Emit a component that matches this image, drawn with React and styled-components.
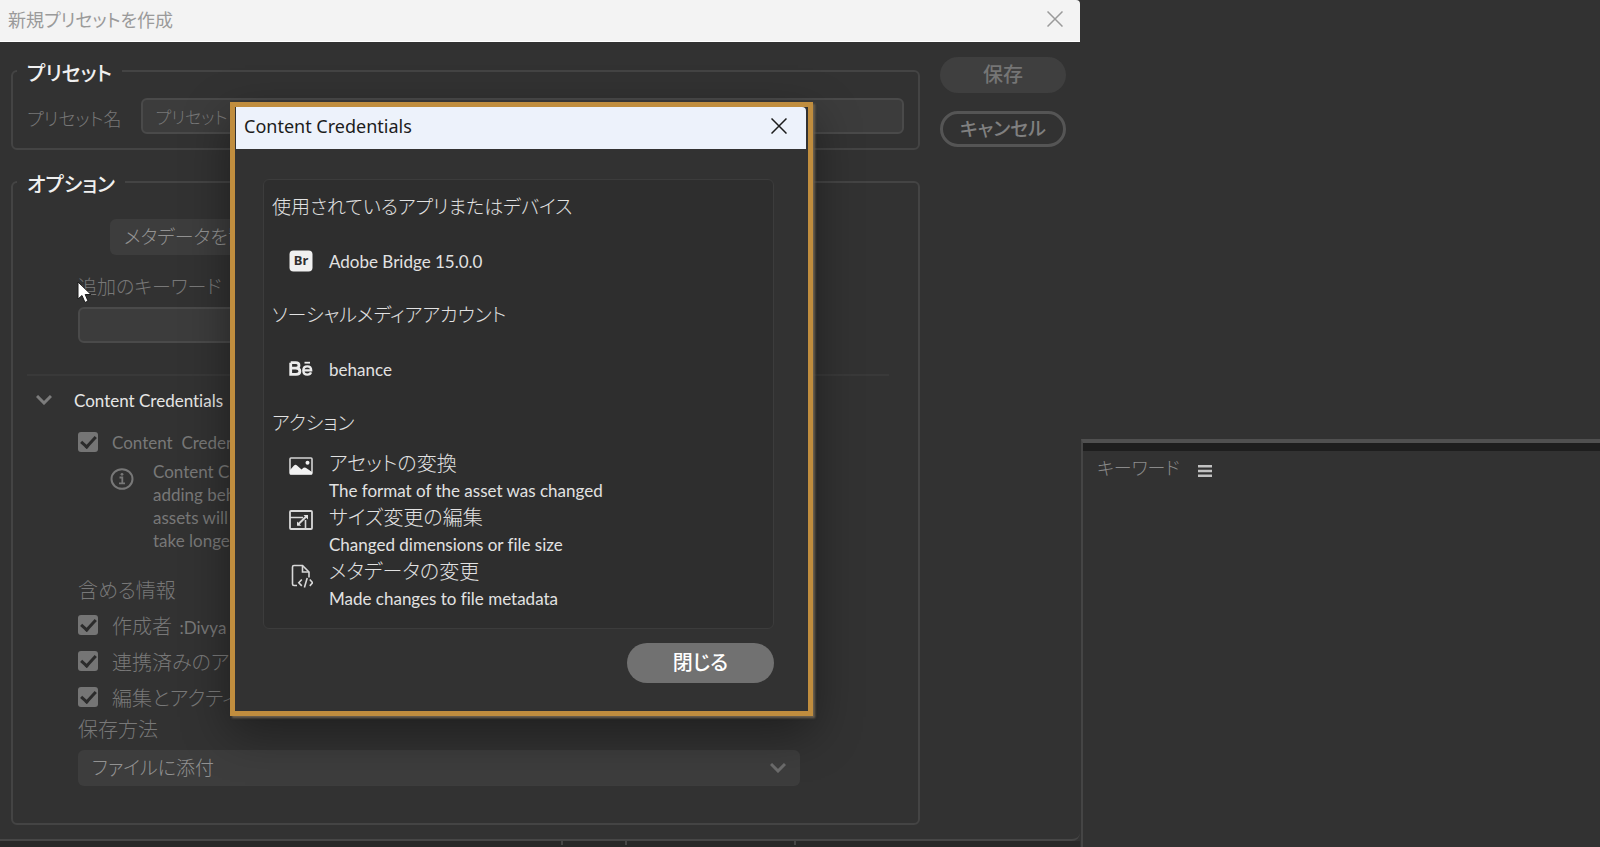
import React, { useState } from 'react';
import styled, { createGlobalStyle, css } from 'styled-components';

const actions = [
  { icon: 'image', title: 'アセットの変換', text: 'The format of the asset was changed' },
  { icon: 'resize', title: 'サイズ変更の編集', text: 'Changed dimensions or file size' },
  { icon: 'metadata', title: 'メタデータの変更', text: 'Made changes to file metadata' },
];

const includes = [
  { id: 'creator', label: '作成者', extra: ':Divya' },
  { id: 'accounts', label: '連携済みのアカウント' },
  { id: 'edits', label: '編集とアクティビティ' },
];

function CloseIcon() {
  return (
    <svg width="16" height="16" viewBox="0 0 16 16" fill="none" stroke="currentColor" strokeWidth="1.5">
      <path d="M0.5 0.5 15.5 15.5M15.5 0.5 0.5 15.5" />
    </svg>
  );
}

function Chevron() {
  return (
    <svg width="16" height="10" viewBox="0 0 16 10" fill="none" stroke="currentColor" strokeWidth="3">
      <path d="M1 1 8 8 15 1" />
    </svg>
  );
}

function InfoIcon() {
  return (
    <svg width="24" height="22" viewBox="0 0 24 22" fill="none" stroke="currentColor" strokeWidth="2">
      <ellipse cx="12" cy="11" rx="10.5" ry="9.8" />
      <path d="M9.5 9.5H12.3V15M9 15.3H15" strokeWidth="1.8" />
      <circle cx="12" cy="6.3" r="1.4" fill="currentColor" stroke="none" />
    </svg>
  );
}

function BridgeIcon() {
  return (
    <svg width="24" height="22" viewBox="0 0 24 22">
      <rect x="0.5" y="0.5" width="23" height="21" rx="4" fill="#f0f0f0" />
      <text x="12" y="15" textAnchor="middle" fontSize="13" fontWeight="700" fontFamily="Noto Sans, sans-serif" fill="#2f2f2f">Br</text>
    </svg>
  );
}

function BehanceIcon() {
  return (
    <svg width="24" height="16" viewBox="0 0 24 16" fill="none" stroke="#ececec">
      <path d="M1.7 1.7H6.6Q10 1.7 10 4.5 10 7.2 6.8 7.2H1.7M6.8 7.2Q10.9 7.2 10.9 10.3 10.9 13.4 7 13.4H1.7V1.7" strokeWidth="2.8" />
      <path d="M14.2 9.4H22.2Q22.2 5.4 18.3 5.4 14.3 5.4 14.3 9.5 14.3 13.6 18.4 13.6 21.3 13.6 22 11.4" strokeWidth="2.3" />
      <path d="M15.5 1.7H21" strokeWidth="1.8" />
    </svg>
  );
}

function ActionIcon({ type }) {
  if (type === 'image') {
    return (
      <svg width="24" height="20" viewBox="0 0 24 20">
        <rect x="1" y="2" width="22" height="16" rx="1" fill="none" stroke="#d4d4d4" strokeWidth="1.6" />
        <path d="M1 14 5 9.5Q6.5 8 8 9.5L12.5 13.5 14.5 11.8Q16 10.8 17.5 12.2L23 16V18.5H1Z" fill="#f2f2f2" />
        <circle cx="18.5" cy="6.8" r="2" fill="#f2f2f2" />
      </svg>
    );
  }
  if (type === 'resize') {
    return (
      <svg width="24" height="20" viewBox="0 0 24 20" fill="none" stroke="#d8d8d8" strokeWidth="1.8">
        <rect x="1" y="1" width="22" height="18" rx="1" />
        <path d="M1 7.5H14M16.5 10V19" strokeWidth="1.6" />
        <path d="M9 14.5 17.5 6.2" strokeWidth="2" />
        <path d="M14.5 5H19V9.5ZM8 11.5V15.7H12.2Z" fill="#e0e0e0" stroke="none" />
      </svg>
    );
  }
  return (
    <svg width="24" height="24" viewBox="0 0 24 24" fill="none" stroke="#d8d8d8" strokeWidth="1.6">
      <path d="M8 21.5H5Q3.5 21.5 3.5 20V3Q3.5 1.5 5 1.5H13.5L20 8V13.5" />
      <path d="M13.5 1.5V8H20" />
      <path d="M12.8 15.5 9.8 18.7 12.8 21.9M20.8 15.5 23.6 18.7 20.8 21.9M18.2 14 15.4 23.4" />
    </svg>
  );
}

function App() {
  const [open, setOpen] = useState(true);

  return (
    <>
      <GlobalStyle />
      <Screen>
        <PresetWindow>
          <TitleBar>
            <span>新規プリセットを作成</span>
            <IconButton type="button" aria-label="閉じる">
              <CloseIcon />
            </IconButton>
          </TitleBar>
          <WindowBody>
            <Groups>
              <Group>
                <legend>プリセット</legend>
                <NameRow>
                  <label htmlFor="preset-name">プリセット名</label>
                  <TextInput id="preset-name" defaultValue="プリセット" />
                </NameRow>
              </Group>
              <Group $grow>
                <legend>オプション</legend>
                <Options>
                  <SelectWrap $indent>
                    <select aria-label="メタデータ">
                      <option>メタデータを置換</option>
                    </select>
                    <Chevron />
                  </SelectWrap>
                  <FieldLabel as="label" htmlFor="keywords" $top>追加のキーワード</FieldLabel>
                  <TextInput id="keywords" />
                </Options>
                <Divider />
                <SectionToggle type="button">
                  <Chevron />
                  Content Credentials
                </SectionToggle>
                <Options>
                  <CheckRow>
                    <input type="checkbox" defaultChecked />
                    <Preserved>{'Content  Credentials'}</Preserved>
                  </CheckRow>
                  <Note>
                    <InfoIcon />
                    <p>
                      Content Credentials
                      <br />
                      adding behance
                      <br />
                      assets will
                      <br />
                      take longer
                    </p>
                  </Note>
                  <FieldLabel>含める情報</FieldLabel>
                  {includes.map((item) => (
                    <CheckRow key={item.id}>
                      <input type="checkbox" defaultChecked />
                      <span>{item.label} {item.extra && <small>{item.extra}</small>}</span>
                    </CheckRow>
                  ))}
                  <FieldLabel as="label" htmlFor="save-method" $tight>保存方法</FieldLabel>
                  <SelectWrap>
                    <select id="save-method">
                      <option>ファイルに添付</option>
                    </select>
                    <Chevron />
                  </SelectWrap>
                </Options>
              </Group>
            </Groups>
            <Buttons>
              <PillButton type="button" $variant="disabled">保存</PillButton>
              <PillButton type="button" $variant="outline">キャンセル</PillButton>
            </Buttons>
          </WindowBody>
        </PresetWindow>

        <SidePanels>
          <KeywordPanel>
            <span>キーワード</span>
            <MenuButton type="button" aria-label="メニュー">
              <svg width="14" height="12" viewBox="0 0 14 12" fill="#c2c2c2">
                <path d="M0 0H14V2.4H0ZM0 4.8H14V7.2H0ZM0 9.6H14V12H0Z" />
              </svg>
            </MenuButton>
          </KeywordPanel>
        </SidePanels>

        <BottomStrip>
          <i />
          <i />
          <i />
        </BottomStrip>

        {open && (
          <Dialog role="dialog" aria-label="Content Credentials">
            <DialogTitle>
              <span>Content Credentials</span>
              <IconButton type="button" aria-label="閉じる" onClick={() => setOpen(false)}>
                <CloseIcon />
              </IconButton>
            </DialogTitle>
            <DialogBody>
              <Card>
                <h2>使用されているアプリまたはデバイス</h2>
                <Entry>
                  <BridgeIcon />
                  <span>Adobe Bridge 15.0.0</span>
                </Entry>
                <h2>ソーシャルメディアアカウント</h2>
                <Entry>
                  <BehanceIcon />
                  <span>behance</span>
                </Entry>
                <h2>アクション</h2>
                {actions.map((action) => (
                  <Action key={action.icon}>
                    <ActionIcon type={action.icon} />
                    <div>
                      <h3>{action.title}</h3>
                      <p>{action.text}</p>
                    </div>
                  </Action>
                ))}
              </Card>
              <PillButton type="button" $variant="primary" onClick={() => setOpen(false)}>閉じる</PillButton>
            </DialogBody>
          </Dialog>
        )}

        <Cursor width="16" height="24" viewBox="0 0 16 24">
          <path d="M1 1V18L5 14.5 8 21.5 11 20 8.2 13.5H14Z" fill="#fff" stroke="#1c1c1c" />
        </Cursor>
      </Screen>
    </>
  );
}

const GlobalStyle = createGlobalStyle`
  * {
    box-sizing: border-box;
  }

  body {
    margin: 0;
    background: #323232;
    font-family: Lato, 'Noto Sans CJK JP', sans-serif;
    font-size: 20px;
    font-weight: 300;
    font-feature-settings: 'palt';
  }

  button, input, select {
    font: inherit;
    font-feature-settings: inherit;
    color: inherit;
  }

  h2, h3, p {
    margin: 0;
    font-weight: inherit;
  }
`;

// latin copy is set smaller and heavier than the Japanese
const latin = css`
  font-size: 17px;
  font-weight: 400;
  font-variant-ligatures: none;
`;

const Screen = styled.div`
  position: relative;
  display: grid;
  grid-template-columns: minmax(0, 1080fr) minmax(0, 520fr);
  grid-template-rows: 1fr 6px;
  min-height: 100vh;
  overflow: hidden;
`;

const PresetWindow = styled.section`
  display: flex;
  flex-direction: column;
  border-bottom: 2px solid #464646;
  border-bottom-right-radius: 8px;
  color: #787878;
`;

const TitleBar = styled.header`
  display: flex;
  align-items: center;
  justify-content: space-between;
  height: 42px;
  padding: 0 17px 4px 8px;
  border-bottom: 1px solid #fff;
  border-top-right-radius: 4px;
  background: #f3f3f3;
  color: #9a9a9a;
  font-size: 18px;
  font-weight: 400;
`;

const IconButton = styled.button`
  display: flex;
  padding: 0;
  border: 0;
  background: none;
  cursor: pointer;
`;

const WindowBody = styled.div`
  display: flex;
  flex: 1;
  gap: 20px;
  padding: 15px 14px 14px 11px;
`;

const Groups = styled.div`
  display: flex;
  flex: 1;
  flex-direction: column;
  gap: 18px;
`;

const Group = styled.fieldset`
  flex: ${(p) => (p.$grow ? '1' : 'none')};
  min-width: 0;
  margin: 0;
  padding: ${(p) => (p.$grow ? '23px' : '13px')} 14px 14px;
  border: 2px solid #444;
  border-radius: 6px;

  legend {
    margin-left: -10px;
    padding: 4px 10px 0;
    color: #f0f0f0;
    font-weight: 500;
    line-height: 24px;
  }
`;

const NameRow = styled.div`
  display: flex;
  align-items: center;
  gap: 20px;

  label {
    padding-top: 4px;
    font-size: 18px;
  }
`;

const TextInput = styled.input`
  flex: 1 0 auto;
  height: 36px;
  padding: 0 12px;
  border: 2px solid #4a4a4a;
  border-radius: 6px;
  background: #3c3c3c;
  font-size: 17px;
`;

const Options = styled.div`
  display: flex;
  flex-direction: column;
  margin: 0 104px 0 51px;
`;

const SelectWrap = styled.div`
  display: grid;
  flex: none;
  align-items: center;
  height: 36px;
  margin-left: ${(p) => (p.$indent ? '32px' : '0')};
  color: #929292;

  select {
    grid-area: 1 / 1;
    height: 36px;
    padding: 0 14px 2px;
    border: 0;
    border-radius: 6px;
    appearance: none;
    background: #3d3d3d;
    font-size: 19px;
  }

  svg {
    grid-area: 1 / 1;
    justify-self: end;
    margin-right: 14px;
    color: #6c6c6c;
  }
`;

const FieldLabel = styled.div`
  height: ${(p) => (p.$top ? '38px' : '35px')};
  margin-top: ${(p) => (p.$top ? '14px' : '0')};
  font-size: ${(p) => (p.$top ? '19px' : '20px')};
  line-height: ${(p) => (p.$tight ? '28px' : '36px')};
`;

const Divider = styled.hr`
  margin: 31px 15px 0 0;
  border: 0;
  border-top: 2px solid #393939;
`;

const SectionToggle = styled.button`
  display: flex;
  align-items: center;
  gap: 22px;
  height: 48px;
  padding: 0 9px;
  border: 0;
  background: none;
  color: #e6e6e6;
  ${latin}

  svg {
    color: #7c7c7c;
  }
`;

const CheckRow = styled.label`
  display: flex;
  align-items: center;
  gap: 14px;
  height: 36px;

  small {
    margin-left: 2px;
    ${latin}
  }

  input {
    display: flex;
    align-items: center;
    justify-content: center;
    width: 20px;
    height: 20px;
    margin: 0;
    border-radius: 3px;
    appearance: none;
    background: #757575;
  }

  input:checked::after {
    content: '';
    width: 12px;
    height: 6px;
    margin-bottom: 4px;
    border: solid #2b2b2b;
    border-width: 0 0 3px 3px;
    transform: rotate(-48deg);
  }
`;

const Preserved = styled.span`
  ${latin}
  white-space: pre;
`;

const Note = styled.div`
  display: flex;
  align-items: flex-start;
  gap: 19px;
  margin: 0 0 20px 32px;
  ${latin}
  line-height: 23px;

  svg {
    margin-top: 8px;
  }
`;

const Buttons = styled.div`
  display: flex;
  flex-direction: column;
  gap: 18px;
  width: 126px;
`;

const pillVariants = {
  disabled: css`
    border: 0;
    background: #3f3f3f;
    color: #757575;
  `,
  outline: css`
    border: 3px solid #555;
    background: none;
    color: #808080;
    font-size: 19px;
  `,
  primary: css`
    width: 147px;
    height: 40px;
    border: 0;
    background: #717171;
    color: #fff;
  `,
};

const PillButton = styled.button`
  height: 36px;
  padding: 0 12px 4px;
  border-radius: 20px;
  font-weight: 500;
  ${(p) => pillVariants[p.$variant]}
`;

const SidePanels = styled.aside`
  display: grid;
  grid-template-rows: 439fr 408fr;
  grid-row: 1 / 3;
  grid-column: 2;
`;

const KeywordPanel = styled.section`
  grid-row: 2;
  display: flex;
  align-items: flex-start;
  gap: 18px;
  margin-left: 1px;
  padding: 0 14px;
  border-top: 4px solid #505050;
  border-left: 2px solid #454545;
  box-shadow: inset 0 8px #1e1e1e;
  color: #8a8a8a;
  font-size: 18px;
  line-height: 50px;
`;

const MenuButton = styled(IconButton)`
  align-items: center;
  height: 56px;
`;

// the row of panel separators peeking out under the window
const BottomStrip = styled.footer`
  display: grid;
  grid-template-columns: 563fr 64fr 169fr 284fr;
  grid-row: 2;
  grid-column: 1;
  background: #282828;

  i {
    height: 4px;
    border-right: 2px solid #464646;
  }
`;

const Dialog = styled.div`
  position: absolute;
  top: 102px;
  left: 230px;
  width: 583px;
  border: 5px solid #c08d3e;
  background: #323232;
  box-shadow: 2px 2px 2px #6b604f, 0 16px 44px rgba(0, 0, 0, 0.4);
  color: #e2e2e2;
`;

const DialogTitle = styled.header`
  display: flex;
  align-items: center;
  justify-content: space-between;
  height: 42px;
  margin: 0 2px 0 1px;
  padding: 0 19px 4px 8px;
  border-top-right-radius: 4px;
  background: #edf2fb;
  color: #1c1c1c;
  font-family: 'Noto Sans', sans-serif;
  font-size: 18px;
  font-weight: 400;
`;

const DialogBody = styled.div`
  display: flex;
  flex-direction: column;
  align-items: flex-end;
  gap: 14px;
  padding: 30px 34px 28px 28px;
`;

const Card = styled.div`
  width: 100%;
  padding: 0 8px 16px;
  border: 1px solid #3c3c3c;
  border-radius: 6px;
  background: #2e2e2e;

  h2 {
    font-size: 19px;
    line-height: 54px;
  }
`;

const Entry = styled.div`
  display: flex;
  align-items: center;
  gap: 16px;
  height: 54px;
  padding-left: 17px;
  ${latin}
`;

const Action = styled.div`
  display: flex;
  align-items: flex-start;
  gap: 16px;
  height: 54px;
  padding-left: 17px;

  svg {
    margin-top: 6px;
  }

  h3 {
    margin-bottom: 2px;
    font-size: 20px;
    line-height: 26px;
  }

  p {
    ${latin}
    line-height: 26px;
  }
`;

const Cursor = styled.svg`
  position: absolute;
  top: 281px;
  left: 77px;
`;

export default App;
